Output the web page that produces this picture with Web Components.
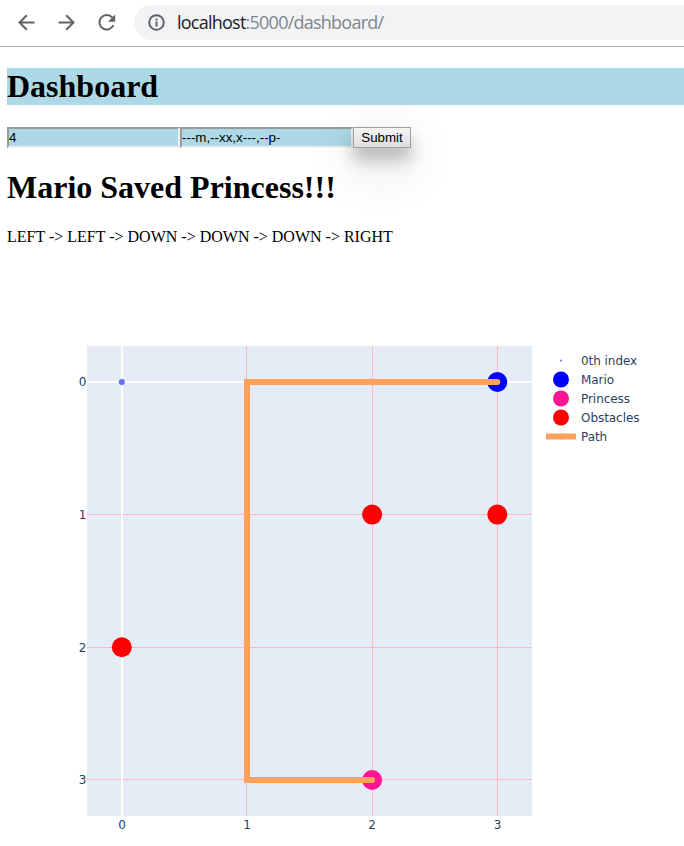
<!DOCTYPE html>
<html lang="en"><head><meta charset="utf-8"><title>Dashboard</title>
<style>html,body{margin:0;background:#fff}body{width:684px;height:846px;overflow:hidden}</style></head>
<body>
<browser-bar><span slot="host">localhost</span><span slot="path">:5000/dashboard/</span></browser-bar>
<dash-page>
<page-heading class="tint">Dashboard</page-heading>
<query-form size="4" grid="---m,--xx,x---,--p-"></query-form>
<page-heading>Mario Saved Princess!!!</page-heading>
<path-steps>LEFT -&gt; LEFT -&gt; DOWN -&gt; DOWN -&gt; DOWN -&gt; RIGHT</path-steps>
<grid-chart></grid-chart>
</dash-page>
<script>
const define = (name, html, setup) => customElements.define(name, class extends HTMLElement {
  constructor() { super(); this.attachShadow({mode: 'open'}).innerHTML = html; }
  connectedCallback() { if (setup) setup(this, this.shadowRoot); }
});

define('browser-bar', `<style>
:host{display:flex;box-sizing:border-box;height:47px;border-bottom:1px solid #b2b2b4;padding:5px 0 0 14px;background:#fff}
svg{display:block;flex:none}
.nav{display:flex;gap:16px;padding-top:5px;width:120px;box-sizing:border-box}
.pill{flex:1;height:35px;box-sizing:border-box;background:#f1f3f4;border-radius:18px 0 0 18px;display:flex;align-items:center;padding-left:14px;gap:12px}
.url{font:18px/35px "Open Sans","Noto Sans",sans-serif;font-weight:400;letter-spacing:-.76px;color:#80868b;white-space:nowrap}
::slotted([slot=host]){color:#202124}
</style>
<div class="nav">
<svg width="24" height="24" fill="none" stroke="#5f6368" stroke-width="2"><path d="M20.5 12.5H5.5M12.8 5.2 5.5 12.5l7.3 7.3"/></svg>
<svg width="24" height="24" fill="none" stroke="#5f6368" stroke-width="2"><path d="M4.5 12.5H19.5M12.2 5.2l7.3 7.3-7.3 7.3"/></svg>
<svg width="24" height="24" fill="none" stroke="#5f6368" stroke-width="2"><path d="M18.4 7.6A7.3 7.3 0 1 0 19.4 15.2"/><path d="M21.2 4.5v7.2H14z" fill="#5f6368" stroke="none"/></svg>
</div>
<div class="pill"><svg width="17" height="17"><circle cx="8.5" cy="8.5" r="7.3" fill="none" stroke="#5f6368" stroke-width="2"/><path d="M7.5 7.5h2v5h-2zM7.5 4.5h2v2h-2z" fill="#5f6368"/></svg>
<div class="url"><slot name="host"></slot><slot name="path"></slot></div></div>`);

define('dash-page', `<style>:host{display:flex;flex-direction:column;padding:21px 0 0 7px;color:#000;font-family:"Liberation Serif",serif}</style><slot></slot>`);

define('page-heading', `<style>:host{display:block}:host(.tint){background:#add8e6}h1{margin:0;font-size:32px;line-height:37px;font-weight:700;white-space:nowrap}</style><h1><slot></slot></h1>`);

define('query-form', `<style>
:host{display:flex;height:21px;margin:22px 0 21px}
input{box-sizing:border-box;width:173px;height:21px;margin:0;padding:1px 0;border:2px solid;border-color:#9a9a9a #eee #eee #9a9a9a;border-radius:0;background:#add8e6;font:13.333px "Liberation Sans",sans-serif;color:#000}
button{box-sizing:border-box;width:58px;height:21px;margin:0;padding:0;border:1px solid #a0a0a0;border-radius:0;background:linear-gradient(#f5f5f5,#dedede);font:13.333px "Liberation Sans",sans-serif;color:#000;box-shadow:0 12px 16px 0 rgba(0,0,0,.24),0 17px 50px 0 rgba(0,0,0,.19)}
</style><input id="n"><input id="g"><button>Submit</button>`, (el, root) => {
  root.getElementById('n').value = el.getAttribute('size');
  root.getElementById('g').value = el.getAttribute('grid');
});

define('path-steps', `<style>:host{display:block;margin-top:22px;font-size:16px;line-height:18px;white-space:nowrap}</style><slot></slot>`);

define('legend-item', `<style>:host{display:flex;height:19px;align-items:center;gap:5px;color:#2a3f5f;font:12px/19px "DejaVu Sans",Verdana,sans-serif;white-space:nowrap;letter-spacing:-.05px}svg{display:block;flex:none}span{padding-top:2px}</style><svg width="30" height="19"></svg><span><slot></slot></span>`, (el, root) => {
  const c = el.getAttribute('color'), r = el.getAttribute('r');
  root.querySelector('svg').innerHTML = r ? `<circle cx="15" cy="9.5" r="${r}" fill="${c}"/>` : `<path d="M0 9.5H30" stroke="${c}" stroke-width="6"/><circle cx="15" cy="9.5" r="3" fill="${c}"/>`;
});

define('grid-chart', `<style>
:host{display:flex;align-items:flex-start;gap:14px;margin-top:100px;padding-left:63px}
svg{display:block;flex:none}
text{font:12px "DejaVu Sans",Verdana,sans-serif;fill:#2a3f5f}
.legend{padding-top:5px}
</style>
<svg width="462" height="500" viewBox="70 346 462 500">
<rect x="87" y="346" width="445" height="470" fill="#e5ecf6"/>
<path d="M246.5 346V816M372.5 346V816M497.5 346V816M87 514.5H532M87 647.5H532M87 779.5H532" stroke="#ffb6c1" fill="none"/>
<path d="M122 346V816M87 382H532" stroke="#fff" stroke-width="2"/>
<circle cx="121.8" cy="382" r="3" fill="#636efa"/>
<circle cx="497.3" cy="382" r="10" fill="#00f"/>
<circle cx="372.1" cy="780" r="10" fill="#ff1493"/>
<g fill="#f00"><circle cx="372.1" cy="514.6" r="10"/><circle cx="497.3" cy="514.6" r="10"/><circle cx="121.8" cy="647.3" r="10"/></g>
<path d="M497.3 382H247V780H372.1" fill="none" stroke="#ffa15a" stroke-width="6"/>
<g fill="#ffa15a"><circle cx="497.3" cy="382" r="3"/><circle cx="372.1" cy="780" r="3"/></g>
<g text-anchor="end"><text x="86.4" y="386">0</text><text x="86.4" y="519">1</text><text x="86.4" y="652">2</text><text x="86.4" y="784">3</text></g>
<g text-anchor="middle"><text x="122" y="829">0</text><text x="247" y="829">1</text><text x="372" y="829">2</text><text x="497.5" y="829">3</text></g>
</svg>
<div class="legend">
<legend-item color="#636efa" r="1">0th index</legend-item>
<legend-item color="#00f" r="8">Mario</legend-item>
<legend-item color="#ff1493" r="8">Princess</legend-item>
<legend-item color="#f00" r="8">Obstacles</legend-item>
<legend-item color="#ffa15a">Path</legend-item>
</div>`);
</script></body></html>
